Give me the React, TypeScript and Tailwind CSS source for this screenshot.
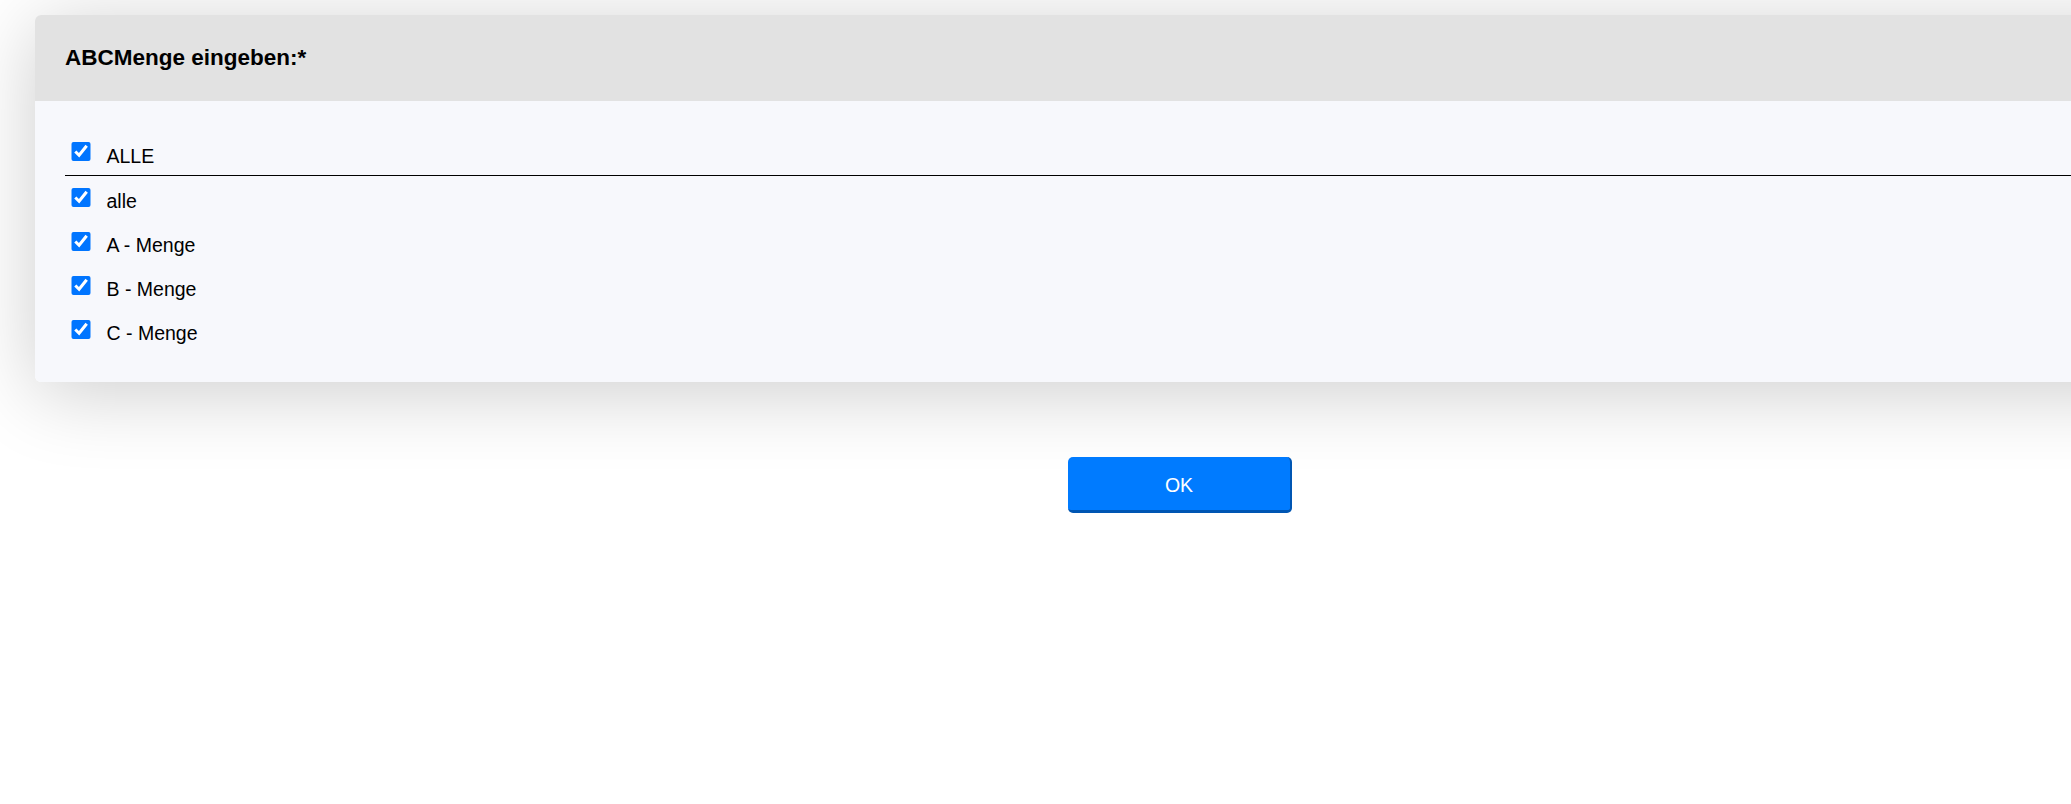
const options = ['alle', 'A - Menge', 'B - Menge', 'C - Menge'];

export default function App() {
  return (
    <div className="w-screen h-screen overflow-hidden bg-white font-['Liberation_Sans',Arial,sans-serif] text-black">
      <div className="ml-[35px] mt-[15px] w-[2300px] rounded-[6px] overflow-hidden shadow-[0_10px_80px_rgba(0,0,0,0.2)]">
        <div className="h-[86px] bg-[#e2e2e2] flex items-center pl-[30px]">
          <h2 className="text-[22.5px] font-bold leading-none">ABCMenge eingeben:*</h2>
        </div>
        <div className="bg-[#f7f8fc] pt-[29px] pb-[30px] pl-[30px]">
          <div className="h-[45.5px] flex items-center border-b-[1.5px] border-black">
            <input type="checkbox" defaultChecked className="m-0 ml-[6px] w-[19.5px] h-[19.5px] mb-[2px]" />
            <span className="ml-[16px] mt-[9px] text-[19.5px] leading-none">ALLE</span>
          </div>
          {options.map((o) => (
            <div key={o} className="h-[44px] flex items-center">
              <input type="checkbox" defaultChecked className="m-0 ml-[6px] w-[19.5px] h-[19.5px]" />
              <span className="ml-[16px] mt-[9px] text-[19.5px] leading-none">{o}</span>
            </div>
          ))}
        </div>
      </div>
      <div className="mt-[75px] pl-[1068px]">
        <button className="w-[224px] h-[56px] pt-[5px] rounded-[5px] bg-[#007bff] border-r-[2px] border-b-[3px] border-[#0056b3] text-white text-[19.5px]">
          OK
        </button>
      </div>
    </div>
  );
}
